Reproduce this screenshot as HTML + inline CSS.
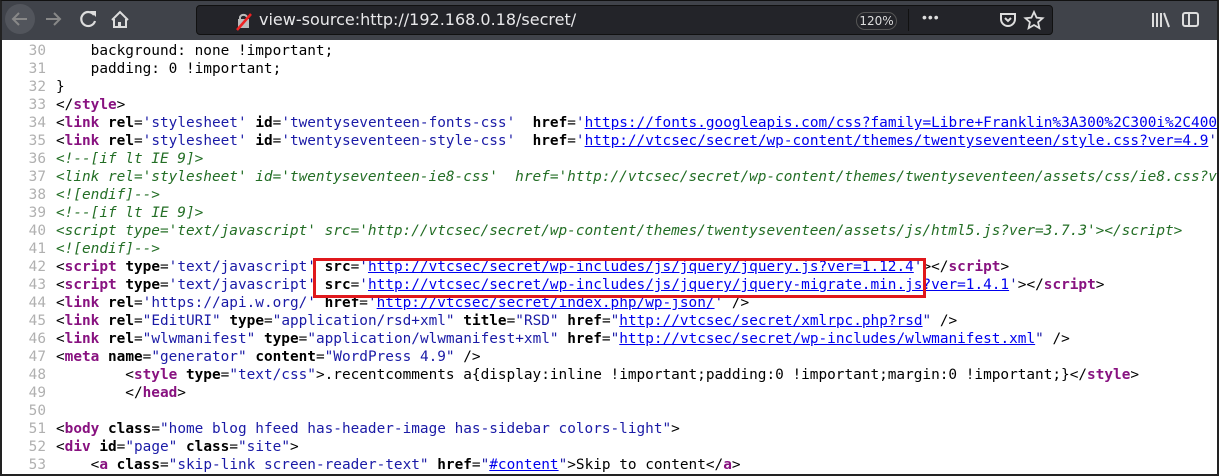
<!DOCTYPE html>
<html><head><meta charset="utf-8"><style>
*{margin:0;padding:0;box-sizing:border-box}
body{width:1219px;height:476px;overflow:hidden;background:#fff;position:relative;font-family:"DejaVu Sans Mono",monospace}
#frame{position:absolute;left:0;top:0;width:1219px;height:476px;border:2px solid #222;border-top:1px solid #111;pointer-events:none;z-index:5}
#tb{position:absolute;left:0;top:0;width:1219px;height:40px;background:#40434a}
#url{position:absolute;left:196px;top:5px;width:857px;height:30px;background:#232429;border:1px solid #111;border-radius:4px}
#url .t{position:absolute;left:62px;top:4px;color:#e8e8ea;font:16px "DejaVu Sans",sans-serif;white-space:nowrap}
#zoom{position:absolute;left:659px;top:6px;width:41px;height:18px;border:1px solid #555;border-radius:9px;color:#ddd;font:12px "DejaVu Sans",sans-serif;text-align:center;line-height:16px}
#code{position:absolute;left:0;top:42px;font-size:14.4px;line-height:18px;color:#000}
.l{height:18px;white-space:pre}
.n{display:inline-block;width:46px;text-align:right;color:#b0b0b0;margin-right:10px}
.g{color:#881280;font-weight:bold}.a{font-weight:bold;color:#000}.v{color:#1a1aa6}
.u{text-decoration:underline;color:#0000ee}
.c{color:#236e25;font-style:italic}
#box{position:absolute;left:313px;top:258px;width:613px;height:40px;border:3px solid #e0181c}
</style></head><body>
<div id="tb">
<svg width="200" height="40" style="position:absolute;left:0;top:0">
<circle cx="20" cy="19" r="15" fill="#52555c"/>
<path d="M27 19H14M19 13l-6 6 6 6" stroke="#888" stroke-width="2" fill="none"/>
<path d="M46 19h13M54 13l6 6-6 6" stroke="#888" stroke-width="2" fill="none"/>
<path d="M94 15a7 7 0 1 0 1 6" stroke="#ddd" stroke-width="2.2" fill="none"/><path d="M90 11h6v6z" fill="#ddd"/>
<path d="M112 20l8-8 8 8M114 19v8h12v-8" stroke="#ddd" stroke-width="2" fill="none"/><rect x="118" y="22" width="3" height="5" fill="#ddd"/>
</svg>
<div id="url"><svg width="20" height="20" style="position:absolute;left:38px;top:5px"><rect x="3" y="8" width="11" height="9" fill="#bbb"/><path d="M5 8V6a4 4 0 0 1 7 0" stroke="#bbb" stroke-width="2" fill="none"/><path d="M2 19L16 3" stroke="#e22" stroke-width="2.5"/></svg><span class="t">view-source:http://192.168.0.18/secret/</span>
<div id="zoom">120%</div>
<div style="position:absolute;left:711px;top:3px;width:1px;height:22px;background:#111"></div>
<span style="position:absolute;left:725px;top:3px;color:#ddd;font:14px sans-serif;letter-spacing:1px">•••</span>
<svg width="60" height="26" style="position:absolute;left:800px;top:2px"><path d="M4 6h14v5a7 7 0 0 1-14 0z" stroke="#ddd" stroke-width="2" fill="none"/><path d="M8 10l3 3 3-3" stroke="#ddd" stroke-width="2" fill="none"/><path d="M37 4l2.6 5.6 6 .6-4.5 4 1.3 6-5.4-3.2-5.4 3.2 1.3-6-4.5-4 6-.6z" stroke="#ddd" stroke-width="1.8" fill="none"/></svg>
</div>
<svg width="80" height="40" style="position:absolute;left:1150px;top:0"><path d="M3 13v14M7 13v14M11 13v14M14 13l5 14" stroke="#ddd" stroke-width="2"/><rect x="33" y="13" width="15" height="13" rx="2" stroke="#ddd" stroke-width="2" fill="none"/><path d="M39 13v13" stroke="#ddd" stroke-width="2"/></svg>
</div>
<div id="code"><div class="l"><span class="n">30</span>    background: none !important;</div><div class="l"><span class="n">31</span>    padding: 0 !important;</div><div class="l"><span class="n">32</span>}</div><div class="l"><span class="n">33</span>&lt;/<span class="g">style</span>&gt;</div><div class="l"><span class="n">34</span>&lt;<span class="g">link</span> <span class="a">rel</span>=<span class="v">'stylesheet'</span> <span class="a">id</span>=<span class="v">'twentyseventeen-fonts-css'</span>  <span class="a">href</span>=<span class="v">'</span><span class="u">https://fonts.googleapis.com/css?family=Libre+Franklin%3A300%2C300i%2C400</span></div><div class="l"><span class="n">35</span>&lt;<span class="g">link</span> <span class="a">rel</span>=<span class="v">'stylesheet'</span> <span class="a">id</span>=<span class="v">'twentyseventeen-style-css'</span>  <span class="a">href</span>=<span class="v">'</span><span class="u">http://vtcsec/secret/wp-content/themes/twentyseventeen/style.css?ver=4.9</span><span class="v">'</span></div><div class="l"><span class="n">36</span><span class="c">&lt;!--[if lt IE 9]&gt;</span></div><div class="l"><span class="n">37</span><span class="c">&lt;link rel='stylesheet' id='twentyseventeen-ie8-css'  href='http://vtcsec/secret/wp-content/themes/twentyseventeen/assets/css/ie8.css?ve</span></div><div class="l"><span class="n">38</span><span class="c">&lt;![endif]--&gt;</span></div><div class="l"><span class="n">39</span><span class="c">&lt;!--[if lt IE 9]&gt;</span></div><div class="l"><span class="n">40</span><span class="c">&lt;script type='text/javascript' src='http://vtcsec/secret/wp-content/themes/twentyseventeen/assets/js/html5.js?ver=3.7.3'&gt;&lt;/script&gt;</span></div><div class="l"><span class="n">41</span><span class="c">&lt;![endif]--&gt;</span></div><div class="l"><span class="n">42</span>&lt;<span class="g">script</span> <span class="a">type</span>=<span class="v">'text/javascript'</span> <span class="a">src</span>=<span class="v">'</span><span class="u">http://vtcsec/secret/wp-includes/js/jquery/jquery.js?ver=1.12.4</span><span class="v">'</span>&gt;&lt;/<span class="g">script</span>&gt;</div><div class="l"><span class="n">43</span>&lt;<span class="g">script</span> <span class="a">type</span>=<span class="v">'text/javascript'</span> <span class="a">src</span>=<span class="v">'</span><span class="u">http://vtcsec/secret/wp-includes/js/jquery/jquery-migrate.min.js?ver=1.4.1</span><span class="v">'</span>&gt;&lt;/<span class="g">script</span>&gt;</div><div class="l"><span class="n">44</span>&lt;<span class="g">link</span> <span class="a">rel</span>=<span class="v">'https://api.w.org/'</span> <span class="a">href</span>=<span class="v">'</span><span class="u">http://vtcsec/secret/index.php/wp-json/</span><span class="v">'</span> /&gt;</div><div class="l"><span class="n">45</span>&lt;<span class="g">link</span> <span class="a">rel</span>=<span class="v">"EditURI"</span> <span class="a">type</span>=<span class="v">"application/rsd+xml"</span> <span class="a">title</span>=<span class="v">"RSD"</span> <span class="a">href</span>=<span class="v">"</span><span class="u">http://vtcsec/secret/xmlrpc.php?rsd</span><span class="v">"</span> /&gt;</div><div class="l"><span class="n">46</span>&lt;<span class="g">link</span> <span class="a">rel</span>=<span class="v">"wlwmanifest"</span> <span class="a">type</span>=<span class="v">"application/wlwmanifest+xml"</span> <span class="a">href</span>=<span class="v">"</span><span class="u">http://vtcsec/secret/wp-includes/wlwmanifest.xml</span><span class="v">"</span> /&gt;</div><div class="l"><span class="n">47</span>&lt;<span class="g">meta</span> <span class="a">name</span>=<span class="v">"generator"</span> <span class="a">content</span>=<span class="v">"WordPress 4.9"</span> /&gt;</div><div class="l"><span class="n">48</span>        &lt;<span class="g">style</span> <span class="a">type</span>=<span class="v">"text/css"</span>&gt;.recentcomments a{display:inline !important;padding:0 !important;margin:0 !important;}&lt;/<span class="g">style</span>&gt;</div><div class="l"><span class="n">49</span>        &lt;/<span class="g">head</span>&gt;</div><div class="l"><span class="n">50</span></div><div class="l"><span class="n">51</span>&lt;<span class="g">body</span> <span class="a">class</span>=<span class="v">"home blog hfeed has-header-image has-sidebar colors-light"</span>&gt;</div><div class="l"><span class="n">52</span>&lt;<span class="g">div</span> <span class="a">id</span>=<span class="v">"page"</span> <span class="a">class</span>=<span class="v">"site"</span>&gt;</div><div class="l"><span class="n">53</span>    &lt;<span class="g">a</span> <span class="a">class</span>=<span class="v">"skip-link screen-reader-text"</span> <span class="a">href</span>=<span class="v">"</span><span class="u">#content</span><span class="v">"</span>&gt;Skip to content&lt;/<span class="g">a</span>&gt;</div></div>
<div id="box"></div>
<div id="frame"></div>
</body></html>
